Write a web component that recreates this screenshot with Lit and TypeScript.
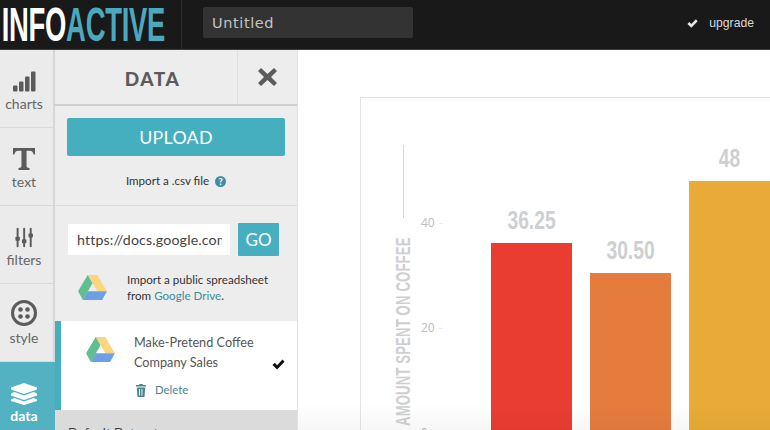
import { LitElement, html, css, svg } from "lit";
import { customElement } from "lit/decorators.js";

const drive = (w: number, h: number) => html`<svg width=${w} height=${h} viewBox="0 0 30 26">
  <path d="M10 0h10l10 17h-10z" fill="#f8d77f"/>
  <path d="M10 0l5 8.5L5 26 0 17z" fill="#5fbf8f"/>
  <path d="M10 17h20l-5 9H5z" fill="#6d9fe6"/>
</svg>`;

const icons = {
  charts: svg`<rect x="0" y="14" width="4.5" height="6" rx="1"/><rect x="6" y="10" width="4.5" height="10" rx="1"/><rect x="12" y="5" width="4.5" height="15" rx="1"/><rect x="18" y="0" width="4.5" height="20" rx="1"/>`,
  text: svg`<path d="M0 0h24v7h-1.500c-.5-2.500-1.500-4-4.500-4h-3.200v17c0 1.300 1 1.500 3.200 1.700V24H6v-2.300c2.200-.2 3.200-.4 3.200-1.700V3H6C3 3 2 4.500 1.500 7H0z"/>`,
  filters: svg`<g><rect x="2" y="0" width="2.400" height="24" rx="1.200"/><rect x="10" y="0" width="2.400" height="24" rx="1.200"/><rect x="18" y="0" width="2.400" height="24" rx="1.200"/><rect x="0.500" y="11" width="5.400" height="5" rx="1"/><rect x="8.500" y="14" width="5.400" height="5" rx="1"/><rect x="16.500" y="7" width="5.400" height="5" rx="1"/></g>`,
  style: svg`<path fill-rule="evenodd" d="M13 0a13 13 0 1 1 0 26a13 13 0 0 1 0-26zM13 3a10 10 0 1 0 0 20a10 10 0 0 0 0-20z"/><circle cx="9.500" cy="9.500" r="2.300"/><circle cx="16.500" cy="9.500" r="2.300"/><circle cx="9.500" cy="16.500" r="2.300"/><circle cx="16.500" cy="16.500" r="2.300"/>`,
  data: svg`<path d="M13 0l13 4.500v2L13 11 0 6.500v-2z"/><path d="M3.500 9L13 12.500 22.500 9 26 10.500v2L13 17 0 12.500v-2z"/><path d="M3.500 15L13 18.500 22.500 15 26 16.500v1.500L13 22 0 18v-1.500z"/>`,
};

const check = (size: number, color: string) => html`<svg width=${size} height=${size} viewBox="0 0 14 12"><path d="M0.500 6.500L3 4l2.500 2.700L11.300 0.500 13.500 3 5.500 11.500z" fill=${color}/></svg>`;

@customElement("app-root")
export class AppRoot extends LitElement {
  static styles = css`
    :host { display: block; width: 770px; height: 430px; overflow: hidden; font-family: Lato, "Open Sans", sans-serif; background: #fff; position: relative; }
    .top { height: 50px; background: #191919; display: flex; align-items: stretch; box-sizing: border-box; border-bottom: 1px solid #3a3a3a; }
    .logo { width: 182px; flex: none; box-sizing: border-box; border-right: 1px solid #2c2c2c; display: flex; align-items: center; }
    .logo span { display: block; width: 320px; flex: none; font-family: "Liberation Sans", sans-serif; font-weight: 700; font-size: 49px; line-height: 50px; white-space: nowrap; transform-origin: 0 50%; transform: scaleX(.56) translate(3px, -1px); letter-spacing: -.5px; color: #fff; }
    .logo b { font-weight: 700; color: #4aa9bd; }
    .title { margin: 7px 0 0 21px; width: 210px; height: 31px; box-sizing: border-box; background: #333; border-radius: 2px; color: #c4c4c4; font-family: "DejaVu Sans", sans-serif; font-size: 14.500px; line-height: 32px; padding-left: 9px; letter-spacing: .6px; }
    .up { margin-left: auto; margin-right: 16px; display: flex; align-items: center; gap: 11px; color: #d8d8d8; font-size: 12.200px; height: 46px; font-family: "Liberation Sans", sans-serif; }
    .body { display: flex; height: 380px; }
    .rail { width: 55px; flex: none; background: #ebebeb; box-sizing: border-box; border-right: 2px solid #d6d6d6; display: flex; flex-direction: column; }
    .nav { height: 78px; flex: none; box-sizing: border-box; border-bottom: 1px solid #d8d8d8; padding-right: 5px; display: flex; flex-direction: column; align-items: center; color: #666; font-size: 14px; line-height: 17px; }
    .nav svg { fill: #5b5b5b; display: block; }
    .nav .ic { height: 26px; margin-top: 16px; margin-bottom: 3px; display: flex; align-items: flex-end; }
    .nav.on { background: #53b2c1; color: #fff; font-weight: 700; border: 0; margin-right: -2px; padding-right: 7px; height: 70px; }
    .nav.on svg { fill: #fff; }
    .nav.on .ic { margin-top: 17px; margin-bottom: 2px; }
    .panel { width: 243px; flex: none; background: #ededed; border-right: 1px solid #e2e2e2; box-sizing: border-box; display: flex; flex-direction: column; }
    .phead { height: 56px; flex: none; box-sizing: border-box; border-bottom: 2px solid #cfcfcf; display: flex; }
    .phead h2 { flex: 1; margin: 0; padding-left: 13px; text-align: center; font-size: 19px; font-weight: 900; letter-spacing: 1.500px; color: #5b5b5b; line-height: 57px; }
    .close { width: 60px; border-left: 1px solid #e0e0e0; display: flex; align-items: center; justify-content: center; box-sizing: border-box; padding-bottom: 1px; }
    .upsec { height: 100px; flex: none; box-sizing: border-box; border-bottom: 1px solid #dcdcdc; padding: 12px 12px 0; display: flex; flex-direction: column; }
    .upload { height: 38px; background: #45afc0; border-radius: 2px; color: #fff; font-size: 17.800px; text-align: center; line-height: 39px; letter-spacing: .3px; }
    .hint { margin-top: 17px; display: flex; align-items: center; justify-content: center; gap: 6px; font-size: 11.600px; color: #333; line-height: 16px; }
    .q { width: 11px; height: 11px; border-radius: 50%; background: #3f8ea0; color: #fff; font-size: 9px; font-weight: 900; text-align: center; line-height: 11px; }
    .urlsec { padding: 17px 18px 0 13px; height: 115px; flex: none; box-sizing: border-box; }
    .urlrow { display: flex; gap: 8px; align-items: center; }
    .url { width: 162px; height: 31px; flex: none; box-sizing: border-box; background: #fff; color: #444; font-size: 14.200px; line-height: 32px; padding: 0 8px 0 9px; white-space: nowrap; letter-spacing: .15px; }
    .url div { overflow: hidden; }
    .go { width: 41px; height: 33px; background: #45afc0; color: #fff; border-radius: 1px; font-size: 17px; text-align: center; line-height: 34px; }
    .imp { display: flex; margin-top: 16px; font-size: 11.600px; line-height: 16px; color: #333; }
    .imp .dr { width: 59px; flex: none; padding: 3px 0 0 10px; box-sizing: border-box; }
    .imp a { color: #3e8c9c; }
    .sel { height: 89px; flex: none; background: #fff; border-left: 6px solid #45afc0; box-sizing: border-box; display: flex; }
    .sel .dr { width: 73px; flex: none; padding: 16px 0 0 25px; box-sizing: border-box; }
    .sel .mid { font-size: 12.700px; line-height: 20px; color: #555; padding-top: 11px; width: 138px; flex: none; }
    .del { display: flex; align-items: center; gap: 9px; margin: 8px 0 0 2px; font-size: 11.400px; color: #4c8492; }
    .sel .ok { margin-top: 34px; }
    .dflt { flex: 1; background: #dcdbdb; font-size: 13px; color: #444; padding: 15px 0 0 13px; line-height: 16px; }
    .main { flex: 1; min-width: 0; position: relative; padding: 47px 0 0 62px; box-sizing: border-box; overflow: hidden; }
    .card { width: 500px; height: 400px; box-sizing: border-box; border: 1px solid #e4e4e4; border-right: 0; display: flex; }
    .ax { width: 52px; flex: none; margin-left: 16px; display: flex; flex-direction: column; align-items: center; }
    .ax i { display: block; width: 1px; height: 73px; background: #d9d9d9; margin-top: 47px; flex: none; }
    .ax span { display: block; margin-top: 19px; white-space: nowrap; writing-mode: vertical-rl; font-family: "Liberation Sans", sans-serif; font-weight: 700; font-size: 20.500px; line-height: 20px; color: #cfcfcf; letter-spacing: .2px; transform-origin: 50% 0; transform: rotate(180deg) scaleY(.642); height: 290px; flex: none; translate: 0 189px; }
    .ticks { width: 42px; flex: none; margin-left: -8px; font-size: 12px; color: #bbb; font-family: "Open Sans", sans-serif; display: flex; flex-direction: column; gap: 89px; padding-top: 117px; line-height: 16px; }
    .ticks div { display: flex; align-items: center; gap: 4px; }
    .ticks div::after { content: ""; width: 4px; height: 1px; background: #eee; }
    .bars { display: flex; gap: 18px; align-items: flex-start; margin-left: 28px; }
    .col { width: 81px; display: flex; flex-direction: column; align-items: center; height: 400px; flex: none; box-sizing: border-box; }
    .col span { display: block; font-family: "Liberation Sans", sans-serif; font-weight: 700; font-size: 26px; line-height: 28px; color: #cdd0d3; transform: scaleX(.74); white-space: nowrap; margin-bottom: 9px; flex: none; }
    .col div { width: 81px; flex: 1; }
    .shade { position: absolute; left: 0; right: 0; bottom: 0; height: 26px; background: linear-gradient(rgba(0,0,0,0), rgba(0,0,0,.035)); pointer-events: none; }
  `;

  render() {
    const nav = (k: keyof typeof icons, w: number, h: number, vb: string, on = false) => html`
      <div class="nav ${on ? "on" : ""}"><div class="ic"><svg width=${w} height=${h} viewBox=${vb}>${icons[k]}</svg></div>${k}</div>`;
    const col = (v: string, pad: number, c: string) => html`
      <div class="col" style="padding-top:${pad}px"><span>${v}</span><div style="background:${c}"></div></div>`;
    return html`
      <div class="top">
        <div class="logo"><span>INFO<b>ACTIVE</b></span></div>
        <div class="title">Untitled</div>
        <div class="up">${check(11, "#e6e6e6")}<span>upgrade</span></div>
      </div>
      <div class="body">
        <div class="rail">
          ${nav("charts", 23, 21, "0 0 23 20")}
          ${nav("text", 22, 22, "0 0 24 24")}
          ${nav("filters", 18, 21, "0 0 22 24")}
          ${nav("style", 26, 26, "0 0 26 26")}
          ${nav("data", 26, 22, "0 0 26 22", true)}
        </div>
        <div class="panel">
          <div class="phead"><h2>DATA</h2><div class="close">
            <svg width="19" height="18" viewBox="0 0 19 18"><path d="M3 0L9.500 6 16 0l3 3-6 6 6 6-3 3-6.500-6L3 18l-3-3 6-6-6-6z" fill="#5b5b5b"/></svg>
          </div></div>
          <div class="upsec">
            <div class="upload">UPLOAD</div>
            <div class="hint"><span>Import a .csv file</span><div class="q">?</div></div>
          </div>
          <div class="urlsec">
            <div class="urlrow"><div class="url"><div>https://docs.google.com</div></div><div class="go">GO</div></div>
            <div class="imp"><div class="dr">${drive(29, 25)}</div><div>Import a public spreadsheet<br/>from <a>Google Drive</a>.</div></div>
          </div>
          <div class="sel">
            <div class="dr">${drive(29, 25)}</div>
            <div class="mid">Make-Pretend Coffee Company Sales
              <div class="del">
                <svg width="10" height="13" viewBox="0 0 10 13"><path d="M3.500 0h3l.5 1h3v1.500H0V1h3zM.8 3.500h8.400L8.500 13h-7zM3 5v6.500h.9V5zm2.500 0v6.500h.9V5z" fill="#4c8492"/></svg>
                <span>Delete</span>
              </div>
            </div>
            <div class="ok">${check(13, "#111")}</div>
          </div>
          <div class="dflt">Default Dataset</div>
        </div>
        <div class="main">
          <div class="card">
            <div class="ax"><i></i><span>AMOUNT SPENT ON COFFEE</span></div>
            <div class="ticks"><div>40</div><div>20</div><div>0</div></div>
            <div class="bars">
              ${col("36.25", 108, "#e93d32")}
              ${col("30.50", 138, "#e57c3e")}
              ${col("48", 46, "#e9ab37")}
            </div>
          </div>
          <div class="shade"></div>
        </div>
      </div>
    `;
  }
}
